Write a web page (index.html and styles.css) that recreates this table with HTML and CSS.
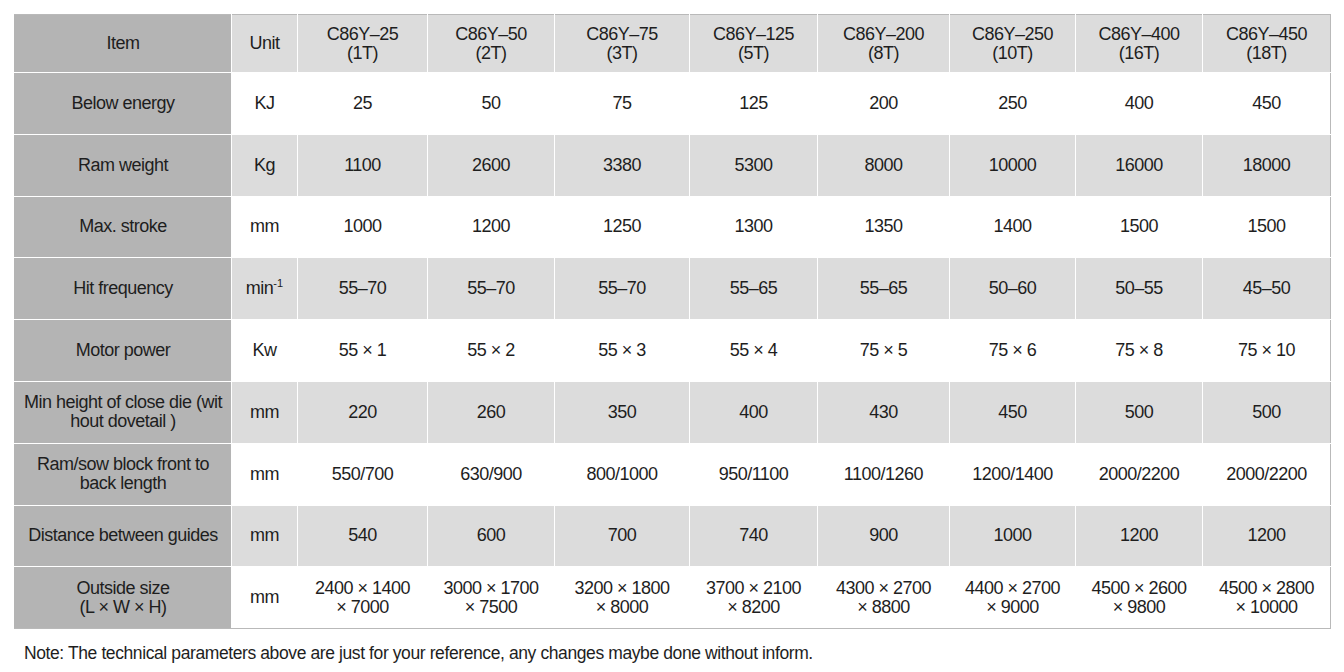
FILE: index.html
```html
<!DOCTYPE html>
<html lang="en">
<head>
    <meta charset="UTF-8">
    <meta name="viewport" content="width=device-width, initial-scale=1.0">
    <title>C86Y Hammer Parameters</title>
    <link rel="stylesheet" href="styles.css">
</head>
<body>
    <!-- Parameter table -->
    <table class="spec-table">
        <colgroup>
            <col class="col-item">
            <col class="col-unit">
            <col style="width: 130px">
            <col style="width: 127px">
            <col style="width: 135px">
            <col style="width: 128px">
            <col style="width: 132px">
            <col style="width: 126px">
            <col style="width: 127px">
            <col style="width: 128px">
        </colgroup>
        <thead>
            <tr class="row-head">
                <th class="item">Item</th>
                <th>Unit</th>
                <th>C86Y–25<br>(1T)</th>
                <th>C86Y–50<br>(2T)</th>
                <th>C86Y–75<br>(3T)</th>
                <th>C86Y–125<br>(5T)</th>
                <th>C86Y–200<br>(8T)</th>
                <th>C86Y–250<br>(10T)</th>
                <th>C86Y–400<br>(16T)</th>
                <th>C86Y–450<br>(18T)</th>
            </tr>
        </thead>
        <tbody>
            <tr class="row-light">
                <td class="item">Below energy</td>
                <td>KJ</td>
                <td>25</td><td>50</td><td>75</td><td>125</td><td>200</td><td>250</td><td>400</td><td>450</td>
            </tr>
            <tr class="row-gray">
                <td class="item">Ram weight</td>
                <td>Kg</td>
                <td>1100</td><td>2600</td><td>3380</td><td>5300</td><td>8000</td><td>10000</td><td>16000</td><td>18000</td>
            </tr>
            <tr class="row-light">
                <td class="item">Max. stroke</td>
                <td>mm</td>
                <td>1000</td><td>1200</td><td>1250</td><td>1300</td><td>1350</td><td>1400</td><td>1500</td><td>1500</td>
            </tr>
            <tr class="row-gray">
                <td class="item">Hit frequency</td>
                <td>min<sup>-1</sup></td>
                <td>55–70</td><td>55–70</td><td>55–70</td><td>55–65</td><td>55–65</td><td>50–60</td><td>50–55</td><td>45–50</td>
            </tr>
            <tr class="row-light">
                <td class="item">Motor power</td>
                <td>Kw</td>
                <td>55 × 1</td><td>55 × 2</td><td>55 × 3</td><td>55 × 4</td><td>75 × 5</td><td>75 × 6</td><td>75 × 8</td><td>75 × 10</td>
            </tr>
            <tr class="row-gray">
                <td class="item">Min height of close die (wit<br>hout dovetail )</td>
                <td>mm</td>
                <td>220</td><td>260</td><td>350</td><td>400</td><td>430</td><td>450</td><td>500</td><td>500</td>
            </tr>
            <tr class="row-light">
                <td class="item">Ram/sow block front to<br>back length</td>
                <td>mm</td>
                <td>550/700</td><td>630/900</td><td>800/1000</td><td>950/1100</td><td>1100/1260</td><td>1200/1400</td><td>2000/2200</td><td>2000/2200</td>
            </tr>
            <tr class="row-gray">
                <td class="item">Distance between guides</td>
                <td>mm</td>
                <td>540</td><td>600</td><td>700</td><td>740</td><td>900</td><td>1000</td><td>1200</td><td>1200</td>
            </tr>
            <tr class="row-light">
                <td class="item">Outside size<br>(L × W × H)</td>
                <td>mm</td>
                <td>2400 × 1400<br>× 7000</td>
                <td>3000 × 1700<br>× 7500</td>
                <td>3200 × 1800<br>× 8000</td>
                <td>3700 × 2100<br>× 8200</td>
                <td>4300 × 2700<br>× 8800</td>
                <td>4400 × 2700<br>× 9000</td>
                <td>4500 × 2600<br>× 9800</td>
                <td>4500 × 2800<br>× 10000</td>
            </tr>
        </tbody>
    </table>

    <p class="note">Note: The technical parameters above are just for your reference, any changes maybe done without inform.</p>
</body>
</html>
```

FILE: styles.css
```css
/* Basic reset */
* {
    margin: 0;
    padding: 0;
    box-sizing: border-box;
}

body {
    font-family: "Liberation Sans", Arial, sans-serif;
    background-color: #ffffff;
    color: #1e1e1e;
    padding: 14px 0 0 14px;
}

/* Table */
.spec-table {
    width: 1317px;
    table-layout: fixed;
    border-collapse: collapse;
    border: 1px solid #b9b9b9;
    font-size: 18px;
    letter-spacing: -0.5px;
    line-height: 19px;
}

.col-item {
    width: 217px;
}

.col-unit {
    width: 66px;
}

.spec-table th,
.spec-table td {
    border: 1px solid #ffffff;
    text-align: center;
    vertical-align: middle;
    font-weight: normal;
    padding: 0;
}

/* outer edge stays grey */
.spec-table tr > :last-child {
    border-right-color: #b9b9b9;
}

.spec-table tbody tr:last-child > * {
    border-bottom-color: #b9b9b9;
}

.spec-table thead tr > * {
    border-top-color: #b9b9b9;
}

.row-head {
    height: 58px;
    background-color: #dcdcdc;
}

.row-light,
.row-gray {
    height: 61.8px;
}

.row-light {
    background-color: #ffffff;
}

.row-gray {
    background-color: #dcdcdc;
}

/* First column is always the darker grey */
.spec-table .item {
    background-color: #b4b4b4;
    border-left-color: #b4b4b4;
}

sup {
    font-size: 11px;
    line-height: 0;
    vertical-align: 7px;
    letter-spacing: 0;
}

/* Footnote */
.note {
    font-size: 17.5px;
    letter-spacing: -0.4px;
    margin: 14px 0 0 10px;
    color: #1e1e1e;
}
```
